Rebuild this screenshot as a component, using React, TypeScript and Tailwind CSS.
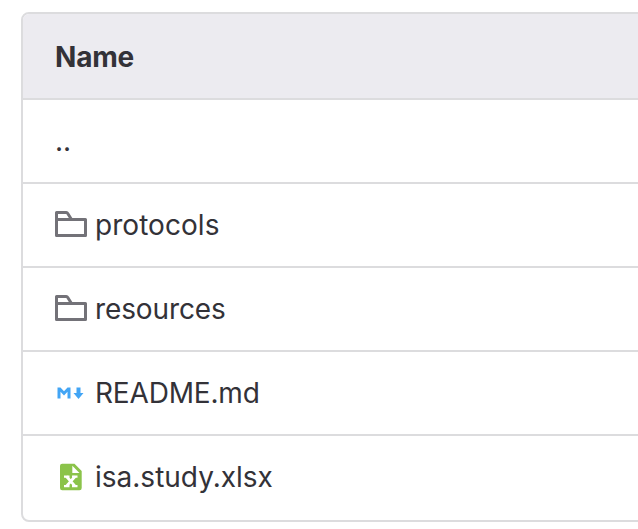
import React from "react";

const Folder = () => (
  <svg viewBox="0 0 32 32" className="h-8 w-8" fill="none" stroke="#737278" strokeWidth="3" strokeLinejoin="round">
    <path d="M1.500 10.500h29v16h-29zM1.500 11V3.500H11.300a1.500 1.500 0 0 1 1.300.8L16.500 10.500" />
  </svg>
);

const Markdown = () => (
  <svg viewBox="0 0 32 32" className="h-8 w-8" fill="#42a5f5">
    <path d="M2.500 21.500v-11h3L9 14.300l3.500-3.800h3v11h-3v-6.700L9 18.600l-3.500-3.800v6.700zM21.500 10.500h4V16h3L23.500 22l-5-6h3z" />
  </svg>
);

const Sheet = () => (
  <svg viewBox="0 0 32 32" className="h-8 w-8">
    <path fill="#8bc34a" d="M7.200 2.800h12.300l7.200 7.200v17a2.300 2.300 0 0 1-2.300 2.300H7.200A2.300 2.300 0 0 1 5 27V5a2.200 2.200 0 0 1 2.200-2.200z" />
    <path fill="#fff" d="M17.300 4.800v7.200h7.200z" />
    <path stroke="#fff" strokeWidth="2.800" fill="none" d="M11.500 15.500l8.500 9.700M20 15.500l-8.500 9.700" />
    <path stroke="#fff" strokeWidth="2.200" d="M9 15.700h5.500M17 15.700h5.500M9 25.200h5.500M17 25.200h5.500" />
  </svg>
);

const rows = [
  { name: "..", icon: null, tracking: "" },
  { name: "protocols", icon: <Folder />, tracking: "tracking-[0.05px]" },
  { name: "resources", icon: <Folder />, tracking: "tracking-[-0.12px]" },
  { name: "README.md", icon: <Markdown />, tracking: "tracking-[-0.18px]" },
  { name: "isa.study.xlsx", icon: <Sheet />, tracking: "" },
];

export default function App() {
  return (
    <div className="h-[529px] w-full overflow-hidden bg-white pt-3 pl-[21px] font-['Inter',sans-serif] text-[28px] text-[#333238]">
      <div className="w-[700px] overflow-hidden rounded-lg border-2 border-[#dcdcde] pb-0.5">
        <div className="flex h-[84px] items-center bg-[#ecebf0] pt-0.5 pl-8 font-bold tracking-[-0.2px]">Name</div>
        {rows.map((row) => (
          <div key={row.name} className="flex h-[84px] items-center gap-2 border-t-2 border-[#dcdcde] pl-8">
            {row.icon}
            <span className={row.tracking}>{row.name}</span>
          </div>
        ))}
      </div>
    </div>
  );
}
